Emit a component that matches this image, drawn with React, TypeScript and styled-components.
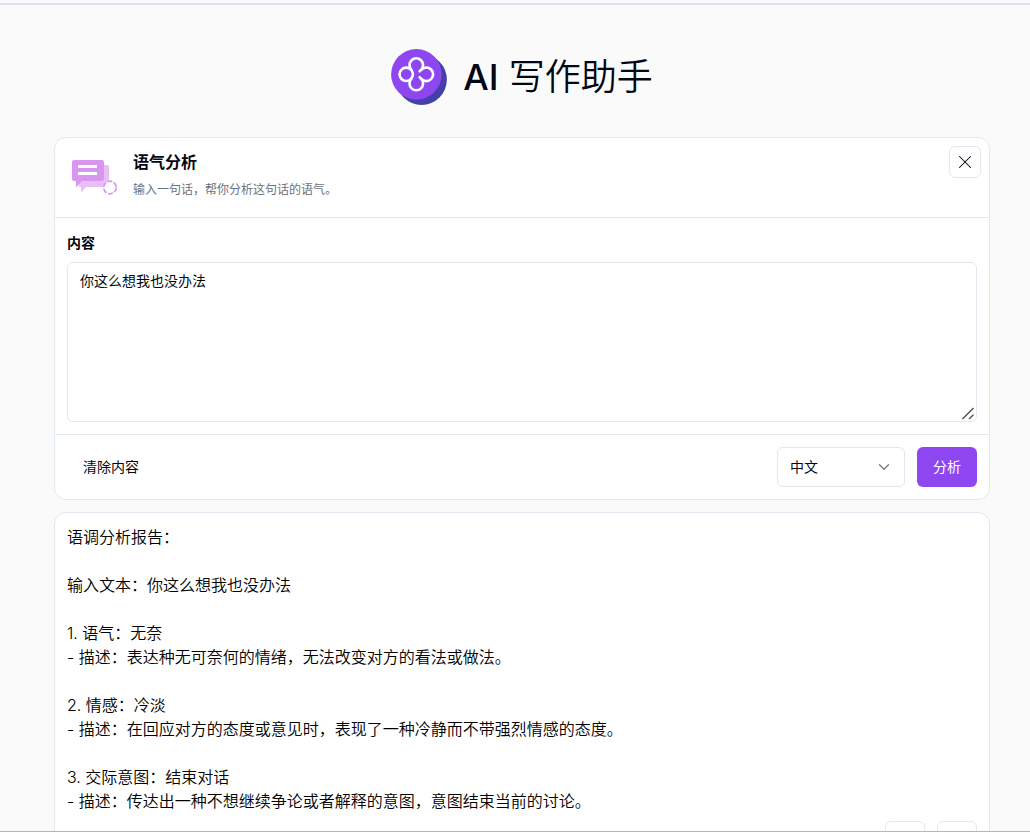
import React from "react";
import styled, { createGlobalStyle } from "styled-components";
import { ChevronDown, X } from "lucide-react";

const GlobalStyle = createGlobalStyle`
  *, *::before, *::after { box-sizing: border-box; }
  body {
    margin: 0;
    background: #fafafa;
    color: #030712;
    font-family: Inter, "Noto Sans CJK SC", sans-serif;
    font-size: 16px;
    line-height: 24px;
  }
  button, select, textarea { font: inherit; color: inherit; margin: 0; }
`;

const Page = styled.div`
  display: flex;
  flex-direction: column;
  height: 100vh;
  overflow: hidden;
  border-bottom: 1px solid #beb2ac;
`;

const TopStrip = styled.div`
  flex: none;
  height: 5px;
  background: #f8f8ff;
  border-bottom: 2px solid #dfe2ec;
`;

const Main = styled.main`
  flex: 1;
  min-height: 0;
  overflow: hidden;
  display: flex;
  flex-direction: column;
  gap: 12px;
  padding: 44px 40px 0 54px;
`;

const Brand = styled.header`
  flex: none;
  display: flex;
  align-items: center;
  justify-content: center;
  gap: 16px;
  margin-bottom: 20px;
`;

const BrandTitle = styled.h1`
  margin: 0;
  font-size: 36px;
  line-height: 56px;
  font-weight: 350;
`;

const Latin = styled.span`
  font-weight: 500;
`;

const Card = styled.section`
  flex: none;
  background: #fff;
  border: 1px solid #e2e8f0;
  border-radius: 12px;
`;

const CardHeader = styled.div`
  display: flex;
  gap: 12px;
  padding: 12px 12px 17px;
  border-bottom: 1px solid #e2e8f0;
`;

const Heading = styled.div`
  flex: 1;
  display: flex;
  flex-direction: column;
  gap: 6px;
`;

const ToolTitle = styled.h2`
  margin: 0;
  font-size: 16px;
  line-height: 24px;
  font-weight: 700;
`;

const ToolText = styled.p`
  margin: 0;
  font-size: 12px;
  line-height: 20px;
  color: #6b7280;
`;

const IconButton = styled.button<{ $size: number }>`
  display: flex;
  align-items: center;
  justify-content: center;
  width: ${(p) => p.$size}px;
  height: ${(p) => p.$size}px;
  padding: 0;
  background: #fff;
  border: 1px solid #e2e8f0;
  border-radius: 6px;
`;

const CloseSlot = styled.div`
  margin: -4px -4px 0 0;
`;

const Field = styled.div`
  display: flex;
  flex-direction: column;
  gap: 9px;
  padding: 15px 12px 12px;
`;

const Label = styled.label`
  font-size: 14px;
  line-height: 20px;
  font-weight: 700;
`;

const TextAreaBox = styled.div`
  position: relative;
`;

const TextArea = styled.textarea`
  display: block;
  width: 100%;
  height: 160px;
  padding: 8px 12px;
  font-size: 14px;
  line-height: 20px;
  background: #fff;
  border: 1px solid #e2e8f0;
  border-radius: 6px;
  outline: none;
  resize: vertical;

  &::-webkit-resizer {
    display: none;
  }
`;

const Grip = styled.svg`
  position: absolute;
  right: 2px;
  bottom: 2px;
  pointer-events: none;
`;

const Actions = styled.div`
  display: flex;
  align-items: center;
  gap: 12px;
  padding: 12px;
  border-top: 1px solid #e2e8f0;
`;

const Button = styled.button<{ $primary?: boolean }>`
  height: 40px;
  padding: 0 16px;
  font-size: 14px;
  line-height: 20px;
  border: 0;
  border-radius: 6px;
  color: ${(p) => (p.$primary ? "#fff" : "inherit")};
  background: ${(p) => (p.$primary ? "#8e47f0" : "transparent")};
`;

const Spacer = styled.div`
  flex: 1;
`;

const SelectBox = styled.div`
  position: relative;
  width: 128px;
  svg {
    position: absolute;
    top: 11px;
    right: 12px;
    pointer-events: none;
    color: #81858c;
  }
`;

const Select = styled.select`
  appearance: none;
  display: block;
  width: 100%;
  height: 40px;
  padding: 0 12px;
  font-size: 14px;
  background: #fff;
  border: 1px solid #e2e8f0;
  border-radius: 6px;
`;

const Report = styled.div`
  padding: 12px 12px 8px;
  font-weight: 350;
  color: #000;
  white-space: pre-wrap;
`;

const ReportActions = styled.div`
  display: flex;
  justify-content: flex-end;
  gap: 12px;
  padding: 0 12px 12px;
`;

const report = `语调分析报告：

输入文本：你这么想我也没办法

1. 语气：无奈
- 描述：表达种无可奈何的情绪，无法改变对方的看法或做法。

2. 情感：冷淡
- 描述：在回应对方的态度或意见时，表现了一种冷静而不带强烈情感的态度。

3. 交际意图：结束对话
- 描述：传达出一种不想继续争论或者解释的意图，意图结束当前的讨论。`;

const Logo = () => (
  <svg width="56" height="56" viewBox="0 0 56 56" aria-hidden="true">
    <circle cx="30.6" cy="30.6" r="25.3" fill="#4440a8" />
    <circle cx="25.4" cy="25.4" r="25.3" fill="#8e47f0" />
    <g fill="none" stroke="#fff" strokeWidth="2.6" strokeLinecap="round" strokeLinejoin="round">
      <circle cx="15.2" cy="25.3" r="6.7" />
      <path d="M20.2 20.6A6.8 6.8 0 1 1 30.4 20.6L28.6 22.2" />
      <path d="M30.4 20.6A6.8 6.8 0 1 1 30.4 30L28.6 28.2" />
      <path d="M20.2 30A6.8 6.8 0 1 0 30.4 30" />
    </g>
  </svg>
);

const ToneIcon = () => (
  <svg width="54" height="50" viewBox="0 0 54 50" aria-hidden="true">
    <path d="M12 15H40Q42 15 42 17V35Q42 37 40 37H19L14 42.5V37H12Z" fill="#e9bdf8" />
    <path d="M7 10H35Q37 10 37 12V29Q37 31 35 31H15L9 37.5V31H7Q5 31 5 29V12Q5 10 7 10Z" fill="#d896ee" />
    <path d="M11 15H30V18H11ZM11 22H30V25H11Z" fill="#fff" />
    <circle cx="43" cy="37.5" r="6.3" fill="#fff" stroke="#d896ee" strokeWidth="1.7" strokeDasharray="5 1.6" />
  </svg>
);

export default function App() {
  return (
    <>
      <GlobalStyle />
      <Page lang="zh-CN">
        <TopStrip />
        <Main>
          <Brand>
            <Logo />
            <BrandTitle>
              <Latin>AI</Latin> 写作助手
            </BrandTitle>
          </Brand>
          <Card>
            <CardHeader>
              <ToneIcon />
              <Heading>
                <ToolTitle>语气分析</ToolTitle>
                <ToolText>输入一句话，帮你分析这句话的语气。</ToolText>
              </Heading>
              <CloseSlot>
                <IconButton $size={32} aria-label="关闭">
                  <X size={22} strokeWidth={1.1} />
                </IconButton>
              </CloseSlot>
            </CardHeader>
            <Field>
              <Label htmlFor="content">内容</Label>
              <TextAreaBox>
                <TextArea id="content" defaultValue="你这么想我也没办法" />
                <Grip width="14" height="14" viewBox="0 0 14 14" aria-hidden="true">
                  <path d="M1.5 13L12.5 2M8 13L12.5 8.8" stroke="#555" strokeWidth="1.5" />
                </Grip>
              </TextAreaBox>
            </Field>
            <Actions>
              <Button>清除内容</Button>
              <Spacer />
              <SelectBox>
                <Select aria-label="语言" defaultValue="zh">
                  <option value="zh">中文</option>
                </Select>
                <ChevronDown size={18} strokeWidth={2} />
              </SelectBox>
              <Button $primary>分析</Button>
            </Actions>
          </Card>
          <Card>
            <Report>{report}</Report>
            <ReportActions>
              <IconButton $size={40} aria-label="复制" />
              <IconButton $size={40} aria-label="重试" />
            </ReportActions>
          </Card>
        </Main>
      </Page>
    </>
  );
}
